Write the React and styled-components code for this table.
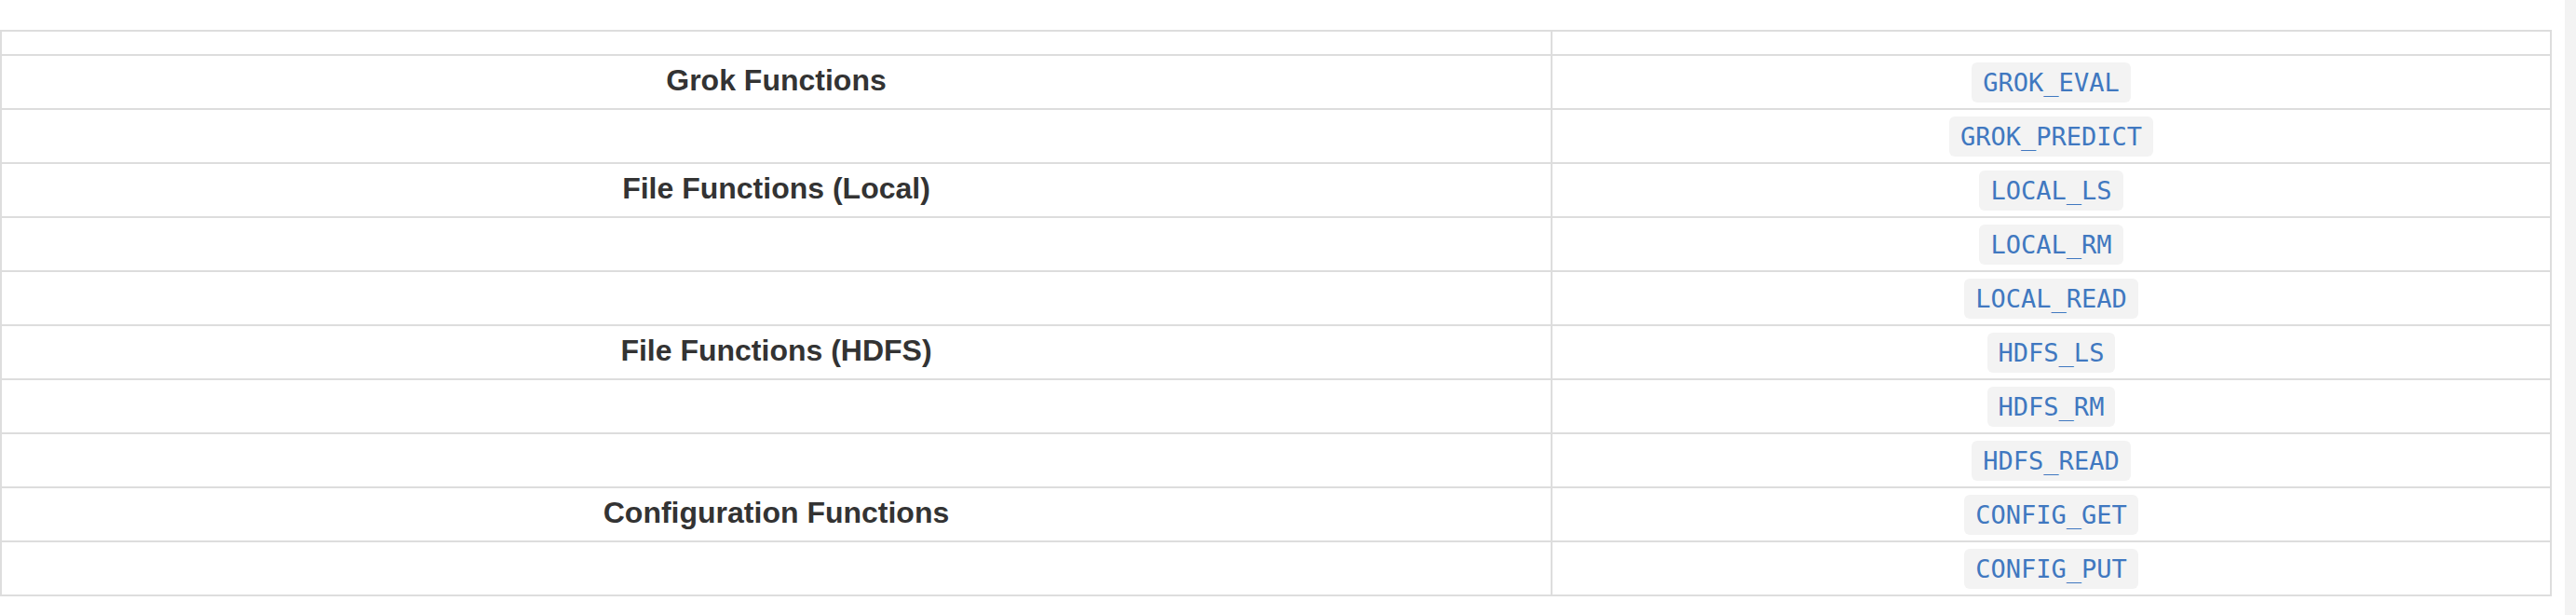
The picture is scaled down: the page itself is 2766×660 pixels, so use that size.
import React from 'react';
import styled, { createGlobalStyle } from 'styled-components';

const GlobalStyle = createGlobalStyle`
  html, body {
    margin: 0;
    padding: 0;
    background: #fff;
  }
`;

const Page = styled.div`
  display: flex;
  width: 2766px;
  height: 660px;
  overflow: hidden;
`;

const Content = styled.div`
  flex: 1;
  padding-top: 32px;
`;

const Gutter = styled.div`
  width: 12px;
  height: 100%;
  background-color: #f3f3f3;
`;

const Table = styled.div`
  width: 2740px;
  box-sizing: border-box;
  border-top: 2px solid #ddd;
  border-left: 2px solid #ddd;
  font-family: 'Liberation Sans', Arial, sans-serif;
`;

const Row = styled.div`
  display: grid;
  grid-template-columns: 1665px 1073px;
  height: ${(p) => (p.$head ? 26 : 58)}px;
`;

const Cell = styled.div`
  box-sizing: border-box;
  display: flex;
  align-items: center;
  justify-content: center;
  padding: 0 0 3px 0;
  border-right: 2px solid #ddd;
  border-bottom: 2px solid #ddd;
  font-size: 32px;
  font-weight: bold;
  color: #333;
`;

const CodeCell = styled(Cell)`
  padding: 0;
`;

const Code = styled.code`
  font-family: 'DejaVu Sans Mono', monospace;
  font-size: 27px;
  font-weight: normal;
  line-height: 31px;
  padding: 6px 12px;
  border-radius: 6px;
  background-color: #f3f3f3;
  color: #4078c0;
`;

const rows = [
  ['Grok Functions', 'GROK_EVAL'],
  ['', 'GROK_PREDICT'],
  ['File Functions (Local)', 'LOCAL_LS'],
  ['', 'LOCAL_RM'],
  ['', 'LOCAL_READ'],
  ['File Functions (HDFS)', 'HDFS_LS'],
  ['', 'HDFS_RM'],
  ['', 'HDFS_READ'],
  ['Configuration Functions', 'CONFIG_GET'],
  ['', 'CONFIG_PUT'],
];

const App = () => {
  return (
    <>
      <GlobalStyle />
      <Page>
        <Content>
          <Table>
            <Row $head>
              <Cell />
              <Cell />
            </Row>
            {rows.map(([group, fn]) => (
              <Row key={fn}>
                <Cell>{group}</Cell>
                <CodeCell>
                  <Code>{fn}</Code>
                </CodeCell>
              </Row>
            ))}
          </Table>
        </Content>
        <Gutter />
      </Page>
    </>
  );
};

export default App;
